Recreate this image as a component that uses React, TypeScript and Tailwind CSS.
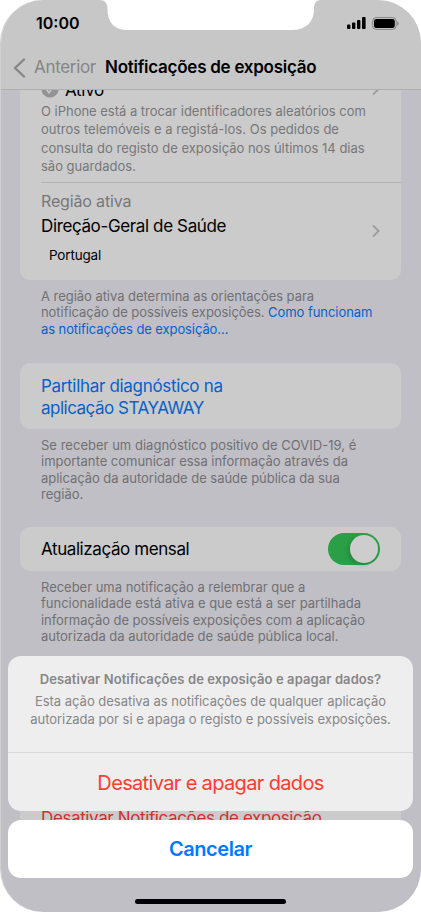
import clsx from 'clsx';

interface Line {
  text: string;
  className?: string;
}

interface LinesProps {
  lines: Line[];
  className?: string;
}

function Lines({ lines, className }: LinesProps) {
  return (
    <p className={clsx('whitespace-nowrap', className)}>
      {lines.map((line) => (
        <span key={line.text} className={clsx('block', line.className)}>
          {line.text}
        </span>
      ))}
    </p>
  );
}

function Chevron({ className }: { className?: string }) {
  return (
    <svg viewBox="0 0 8 14" className={clsx('h-3.5 w-2 shrink-0', className)} fill="none">
      <path d="M1 1.4 6.6 7 1 12.6" stroke="#9c9c9f" strokeWidth="1.8" />
    </svg>
  );
}

function StatusBar() {
  return (
    <div className="flex h-[46px] items-center justify-between pl-[35px] pr-[22px]">
      <span className="text-[16px] font-semibold leading-none">10:00</span>
      <div className="flex items-center gap-1.5">
        <svg viewBox="0 0 19 12" className="h-3 w-[19px]">
          <rect x="0" y="7.5" width="3.4" height="4.5" rx="1" />
          <rect x="5" y="5.5" width="3.4" height="6.5" rx="1" />
          <rect x="10" y="3" width="3.4" height="9" rx="1" />
          <rect x="15" y="0" width="3.6" height="12" rx="1" />
        </svg>
        <svg viewBox="0 0 27 13" className="h-[13px] w-[27px]">
          <rect x="0.6" y="0.6" width="23.6" height="11.8" rx="3.6" fill="none" stroke="#858585" strokeWidth="1" />
          <rect x="2" y="2" width="20.8" height="9" rx="2.2" />
          <path d="M25.2 4.4c1 .4 1.4 1.2 1.4 2.1s-.4 1.7-1.4 2.1z" fill="#858585" />
        </svg>
      </div>
    </div>
  );
}

function NavBar() {
  return (
    <div className="flex h-[43px] items-center whitespace-nowrap pl-3">
      <svg viewBox="0 0 13 20" className="h-5 w-[13px]" fill="none">
        <path d="M11 1.5 2 10l9 8.500" stroke="#858585" strokeWidth="2.3" strokeLinecap="round" strokeLinejoin="round" />
      </svg>
      <span className="ml-2 w-[71px] pt-px text-[17px] tracking-[-0.32px] text-[#858585]">Anterior</span>
      <span className="pt-px text-[17px] font-semibold tracking-[-0.26px]">Notificações de exposição</span>
    </div>
  );
}

function Settings() {
  return (
    <div className="flex h-[822px] flex-col overflow-hidden bg-[#c0bfc5] pl-[19px] pr-[20px]">
      <section className="h-[190px] shrink-0 rounded-b-[10px] bg-[#cbcbcb]">
        <div className="-mt-[12px] flex h-[24px] items-center pl-[21px] pr-[21px]">
          <svg viewBox="0 0 18 18" className="-mt-0.5 size-[18px]" fill="none">
            <circle cx="9" cy="9" r="8.6" fill="#929294" />
            <path d="m5.2 9.2 2.8 3.6 4.6-6.600" stroke="#cbcbcb" strokeWidth="1.5" />
          </svg>
          <span className="ml-1.5 grow pt-px text-[17px] tracking-[-0.3px]">Ativo</span>
          <Chevron className="-mt-0.5" />
        </div>
        <Lines
          className="pl-[21px] text-[13px] leading-[18.3px] text-[#777779]"
          lines={[
            { text: 'O iPhone está a trocar identificadores aleatórios com', className: 'tracking-[-0.02px]' },
            { text: 'outros telemóveis e a registá-los. Os pedidos de', className: 'tracking-[0.03px]' },
            { text: 'consulta do registo de exposição nos últimos 14 dias' },
            { text: 'são guardados.' },
          ]}
        />
        <div className="ml-[21px] mt-[7px] flex h-[98px] items-center border-t border-[#b3b3b5] pr-[21px]">
          <div className="-mt-[8px] grow whitespace-nowrap">
            <div className="text-[16px] leading-[24px] tracking-[-0.15px] text-[#777779]">Região ativa</div>
            <div className="pt-px text-[17px] leading-[25px] tracking-[-0.37px]">Direção-Geral de Saúde</div>
            <div className="mt-1 pl-2 text-[13.5px] leading-[24px] tracking-[-0.18px]">Portugal</div>
          </div>
          <Chevron className="-mt-0.5" />
        </div>
      </section>

      <div className="mt-2 h-[75px] shrink-0 whitespace-nowrap pl-[21px] text-[13px] leading-[16.4px] tracking-[-0.04px] text-[#707074]">
        <div>A região ativa determina as orientações para</div>
        <div className="tracking-[-0.06px]">
          notificação de possíveis exposições. <span className="text-[#0561cc]">Como funcionam</span>
        </div>
        <div className="tracking-[-0.09px] text-[#0561cc]">as notificações de exposição…</div>
      </div>

      <section className="flex h-[66px] shrink-0 items-center rounded-[10px] bg-[#cbcbcb]">
        <Lines
          className="pl-[21px] pt-0.5 text-[17px] leading-[22.5px] text-[#0561cc]"
          lines={[
            { text: 'Partilhar diagnóstico na', className: 'tracking-[-0.32px]' },
            { text: 'aplicação STAYAWAY', className: 'tracking-[-0.5px]' },
          ]}
        />
      </section>

      <Lines
        className="mt-2 h-[90px] shrink-0 pl-[21px] text-[13px] leading-[16.4px] text-[#707074]"
        lines={[
          { text: 'Se receber um diagnóstico positivo de COVID-19, é', className: 'tracking-[0.02px]' },
          { text: 'importante comunicar essa informação através da', className: 'tracking-[-0.02px]' },
          { text: 'aplicação da autoridade de saúde pública da sua', className: 'tracking-[-0.04px]' },
          { text: 'região.' },
        ]}
      />

      <section className="flex h-[44px] shrink-0 items-center justify-between rounded-[10px] bg-[#cbcbcb] pl-[21px] pr-[21px]">
        <span className="pt-0.5 text-[17px] tracking-[-0.41px]">Atualização mensal</span>
        <div className="flex h-8 w-[52px] items-center justify-end rounded-full bg-[#2a9f47] pr-0.5">
          <div className="size-7 rounded-full bg-[#cdcdcd] shadow-[-2px_2px_4px_rgba(0,0,0,0.15)]" />
        </div>
      </section>

      <Lines
        className="mt-2 h-[75px] shrink-0 pl-[21px] text-[13px] leading-[16.3px] text-[#707074]"
        lines={[
          { text: 'Receber uma notificação a relembrar que a', className: 'tracking-[-0.02px]' },
          { text: 'funcionalidade está ativa e que está a ser partilhada' },
          { text: 'informação de possíveis exposições com a aplicação', className: 'tracking-[-0.06px]' },
          { text: 'autorizada da autoridade de saúde pública local.', className: 'tracking-[-0.02px]' },
        ]}
      />

      <section className="mt-[142px] flex h-[44px] shrink-0 items-center rounded-[10px] bg-[#cbcbcb] pl-[21px]">
        <span className="whitespace-nowrap pt-px text-[17px] tracking-[-0.38px] text-[#c9332b]">
          Desativar Notificações de exposição
        </span>
      </section>
    </div>
  );
}

function ActionSheet() {
  return (
    <div className="absolute inset-x-0 bottom-0 flex h-[256px] flex-col pl-[7px] pr-2 text-center">
      <div className="h-[155px] shrink-0 rounded-[13px] bg-[#eeeeee]">
        <div className="h-[97px] whitespace-nowrap border-b border-[#dadadb] pt-[13px] text-[13px] text-[#868688]">
          <div className="font-semibold leading-5 tracking-[0.09px]">
            Desativar Notificações de exposição e apagar dados?
          </div>
          <Lines
            className="mt-[3px] leading-[18.3px] tracking-[-0.03px]"
            lines={[
              { text: 'Esta ação desativa as notificações de qualquer aplicação', className: 'tracking-[-0.01px]' },
              { text: 'autorizada por si e apaga o registo e possíveis exposições.' },
            ]}
          />
        </div>
        <button className="block h-[58px] w-full pt-px text-[20px] tracking-[-0.65px] text-[#ff3b30]">
          Desativar e apagar dados
        </button>
      </div>
      <button className="mt-[8.5px] h-[58px] shrink-0 rounded-[13px] bg-white text-[20px] font-semibold tracking-[-0.42px] text-[#007aff]">
        Cancelar
      </button>
      <div className="mx-auto mt-[21px] h-[5px] w-[151px] rounded-full bg-black" />
    </div>
  );
}

export default function App() {
  return (
    <div className="h-[912px] w-[421px] overflow-hidden bg-white font-['Inter',sans-serif] text-black">
      <div className="relative h-full overflow-hidden rounded-[43px] border-l border-[#d0d0d3]">
        <header className="h-[90px] border-b border-[#afafb1] bg-[#c7c7c7]">
          <StatusBar />
          <NavBar />
        </header>
        <Settings />
        <svg viewBox="0 0 222 31" className="absolute left-[98px] top-0 h-[31px] w-[222px]">
          <path d="M0 0C6 0 8.500 3 8.500 9C8.500 22 15 30 28 30H193C207 30 215 22 215 9C215 3 217 0 222 0Z" fill="#fff" />
        </svg>
        <ActionSheet />
      </div>
    </div>
  );
}
